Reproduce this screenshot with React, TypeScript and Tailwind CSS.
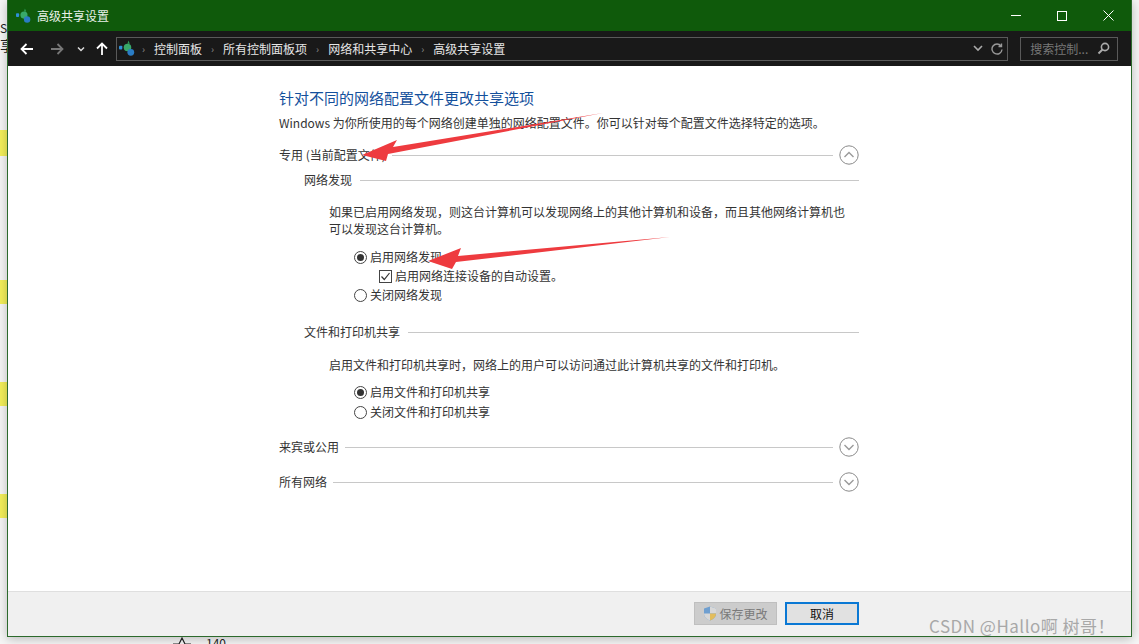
const FONT = "font-['Microsoft_YaHei','Noto_Sans_CJK_SC','Noto_Sans',sans-serif]";

function NetIcon({ size = 18 }: { size?: number }) {
  return (
    <svg width={size} height={size} viewBox="0 0 18 18" className="shrink-0">
      <rect x="0" y="6" width="3.5" height="4" rx="1" fill="#2f8fd8" />
      <path d="M10 0.5 L11.5 4 L9 4 Z" fill="#2f9e57" />
      <circle cx="9" cy="8" r="4" fill="#38a96a" />
      <circle cx="12.5" cy="13" r="3.6" fill="#2a7cc4" />
    </svg>
  );
}

function Radio({ checked }: { checked?: boolean }) {
  return (
    <span className="w-[13px] h-[13px] rounded-full border border-[#444] bg-white flex items-center justify-center shrink-0">
      {checked && <span className="w-[7px] h-[7px] rounded-full bg-[#333]" />}
    </span>
  );
}

function Chevron({ up }: { up?: boolean }) {
  return (
    <svg width="20" height="20" viewBox="0 0 20 20" className="shrink-0">
      <circle cx="10" cy="10" r="9.2" fill="white" stroke="#8a8a8a" strokeWidth="1" />
      <path d={up ? "M5.5 12 L10 7.5 L14.5 12" : "M5.5 8 L10 12.5 L14.5 8"} fill="none" stroke="#9a9a9a" strokeWidth="1.4" />
    </svg>
  );
}

function SectionHead({ label, up }: { label: string; up?: boolean }) {
  return (
    <div className="flex items-center h-5 w-[580px]">
      <span className="text-[12px] text-[#333] whitespace-nowrap">{label}</span>
      <span className="flex-1 h-px bg-[#c8c8c8] ml-[6px] mr-[6px]" />
      <Chevron up={up} />
    </div>
  );
}

function SubHead({ label }: { label: string }) {
  return (
    <div className="flex items-center h-[18px] w-[555px] ml-[25px]">
      <span className="text-[12px] text-[#333] whitespace-nowrap">{label}</span>
      <span className="flex-1 h-px bg-[#c8c8c8] ml-[8px]" />
    </div>
  );
}

function Option({ label, checked }: { label: string; checked?: boolean }) {
  return (
    <div className="flex items-center gap-[3px] ml-[75px] h-[19px] text-[12px] text-[#333] whitespace-nowrap">
      <Radio checked={checked} />
      <span className="-mt-[2px]">{label}</span>
    </div>
  );
}

export default function App() {
  return (
    <div className={`relative w-[1139px] h-[644px] overflow-hidden bg-[#f6f6f6] ${FONT}`}>
      {/* page behind the window */}
      <div className="absolute left-0 top-[130px] w-[7px] h-[26px] bg-[#f4f05a]" />
      <div className="absolute left-0 top-[280px] w-[7px] h-[24px] bg-[#f4f05a]" />
      <div className="absolute left-0 top-[382px] w-[7px] h-[24px] bg-[#f4f05a]" />
      <div className="absolute left-0 top-[494px] w-[7px] h-[24px] bg-[#f4f05a]" />
      <div className="absolute left-0 top-[22px] text-[12px] text-[#222] leading-none">S</div>
      <div className="absolute left-0 top-[38px] text-[14px] text-[#222] leading-none">享</div>
      <div className="absolute left-[172px] top-[637px] flex items-start gap-[14px] text-[12px] leading-none text-[#222]">
        <svg width="20" height="12" viewBox="0 0 20 12"><path d="M1 7 L7 7 L10 1 L13 7 L19 7" fill="none" stroke="#222" strokeWidth="1.2" /></svg>
        <span>140</span>
      </div>

      {/* window */}
      <div className="relative ml-[7px] w-[1125px] h-[637px] border-x border-b border-[#2c6a2c] bg-white flex flex-col shadow-[0_2px_10px_rgba(0,0,0,0.25)]">
        {/* title bar */}
        <div className="h-[31px] bg-[#0f5a0b] flex items-center pl-[8px] text-white shrink-0">
          <NetIcon size={16} />
          <span className="ml-[5px] text-[12px] text-[#e8f0e8]">高级共享设置</span>
          <div className="ml-auto flex items-center">
            <div className="w-[46px] h-[31px] flex items-center justify-center"><span className="w-[10px] h-px bg-white" /></div>
            <div className="w-[46px] h-[31px] flex items-center justify-center"><span className="w-[10px] h-[10px] border border-white" /></div>
            <div className="w-[46px] h-[31px] flex items-center justify-center">
              <svg width="11" height="11" viewBox="0 0 11 11"><path d="M0.5 0.5 L10.5 10.5 M10.5 0.5 L0.5 10.5" stroke="white" strokeWidth="1" /></svg>
            </div>
          </div>
        </div>

        {/* toolbar */}
        <div className="h-[35px] bg-[#191919] flex items-center shrink-0 pl-[12px] pr-[13px]">
          <svg width="14" height="12" viewBox="0 0 14 12" className="shrink-0"><path d="M13 6 H2 M6.5 1 L1.5 6 L6.5 11" fill="none" stroke="white" strokeWidth="1.8" /></svg>
          <svg width="14" height="12" viewBox="0 0 14 12" className="shrink-0 ml-[16px]"><path d="M1 6 H12 M7.5 1 L12.5 6 L7.5 11" fill="none" stroke="#777" strokeWidth="1.8" /></svg>
          <svg width="8" height="6" viewBox="0 0 8 6" className="shrink-0 ml-[13px]"><path d="M1 1.5 L4 4.5 L7 1.5" fill="none" stroke="#ddd" strokeWidth="1.5" /></svg>
          <svg width="12" height="14" viewBox="0 0 12 14" className="shrink-0 ml-[11px]"><path d="M6 13 V2 M1 6.5 L6 1.5 L11 6.5" fill="none" stroke="white" strokeWidth="1.8" /></svg>
          <div className="ml-[8px] w-[895px] h-[24px] border border-[#5a5a5a] flex items-center pl-[2px] pr-[4px] text-[12px] text-[#e6e6e6]">
            <NetIcon size={17} />
            <span className="ml-[6px] text-[#888] text-[10px]">›</span>
            <span className="ml-[9px]">控制面板</span>
            <span className="ml-[9px] text-[#888] text-[10px]">›</span>
            <span className="ml-[9px]">所有控制面板项</span>
            <span className="ml-[9px] text-[#888] text-[10px]">›</span>
            <span className="ml-[9px]">网络和共享中心</span>
            <span className="ml-[9px] text-[#888] text-[10px]">›</span>
            <span className="ml-[9px]">高级共享设置</span>
            <svg width="10" height="7" viewBox="0 0 10 7" className="ml-auto"><path d="M1 1 L5 5 L9 1" fill="none" stroke="#aaa" strokeWidth="1.6" /></svg>
            <svg width="12" height="12" viewBox="0 0 12 12" className="ml-[8px]"><path d="M10 3 A5 5 0 1 0 11 6.5 M10.5 0.5 V3.5 H7.5" fill="none" stroke="#999" strokeWidth="1.4" /></svg>
          </div>
          <div className="ml-[12px] w-[98px] h-[24px] border border-[#5a5a5a] flex items-center pl-[9px] pr-[7px] text-[12px] text-[#777] whitespace-nowrap">
            <span>搜索控制...</span>
            <svg width="13" height="13" viewBox="0 0 13 13" className="ml-auto"><circle cx="8" cy="5" r="3.6" fill="none" stroke="#aaa" strokeWidth="1.6" /><path d="M5.5 7.5 L1.5 11.5" stroke="#aaa" strokeWidth="2" /></svg>
          </div>
        </div>

        {/* body */}
        <div className="flex-1 pl-[271px] pt-[21px] flex flex-col">
          <h1 className="text-[15px] leading-[22px] text-[#14509c] font-normal whitespace-nowrap">针对不同的网络配置文件更改共享选项</h1>
          <p className="mt-[5px] text-[12px] leading-[18px] text-[#333] whitespace-nowrap">Windows 为你所使用的每个网络创建单独的网络配置文件。你可以针对每个配置文件选择特定的选项。</p>
          <div className="mt-[13px]"><SectionHead label="专用 (当前配置文件)" up /></div>
          <div className="mt-[6px]"><SubHead label="网络发现" /></div>
          <p className="mt-[14px] ml-[50px] w-[520px] text-[12px] leading-[17px] text-[#333]">如果已启用网络发现，则这台计算机可以发现网络上的其他计算机和设备，而且其他网络计算机也可以发现这台计算机。</p>
          <div className="mt-[11px]"><Option label="启用网络发现" checked /></div>
          <div className="flex items-center gap-[3px] ml-[100px] h-[19px] text-[12px] text-[#333] whitespace-nowrap">
            <span className="w-[13px] h-[13px] border border-[#444] bg-white flex items-center justify-center shrink-0">
              <svg width="11" height="11" viewBox="0 0 11 11"><path d="M1.5 5.5 L4.3 8.5 L9.5 2" fill="none" stroke="#333" strokeWidth="1.2" /></svg>
            </span>
            <span className="-mt-[2px]">启用网络连接设备的自动设置。</span>
          </div>
          <Option label="关闭网络发现" />
          <div className="mt-[18px]"><SubHead label="文件和打印机共享" /></div>
          <p className="mt-[15px] ml-[50px] text-[12px] leading-[17px] text-[#333] whitespace-nowrap">启用文件和打印机共享时，网络上的用户可以访问通过此计算机共享的文件和打印机。</p>
          <div className="mt-[10px]"><Option label="启用文件和打印机共享" checked /></div>
          <div className="mt-[1px]"><Option label="关闭文件和打印机共享" /></div>
          <div className="mt-[15px]"><SectionHead label="来宾或公用" /></div>
          <div className="mt-[15px]"><SectionHead label="所有网络" /></div>
        </div>

        {/* footer */}
        <div className="h-[45px] bg-[#f0f0f0] border-t border-[#dfdfdf] shrink-0 flex items-start pt-[10px] pl-[686px] gap-[8px] text-[12px]">
          <div className="w-[83px] h-[23px] bg-[#cccccc] border border-[#bfbfbf] flex items-center justify-center gap-[2px] text-[#7a7a7a]">
            <svg width="14" height="15" viewBox="0 0 14 15">
              <path d="M7 0.5 L13 2.5 V8 C13 11 10 13.5 7 14.5 C4 13.5 1 11 1 8 V2.5 Z" fill="#6f9fd0" />
              <path d="M7 0.5 L13 2.5 V7.5 H7 Z" fill="#d8d8d8" />
              <path d="M7 7.5 V14.5 C4 13.5 1 11 1 7.5 Z" fill="#d8d8d8" />
              <path d="M7 7.5 H13 C13 11 10 13.5 7 14.5 Z" fill="#e3bd5c" />
            </svg>
            <span>保存更改</span>
          </div>
          <div className="w-[74px] h-[23px] bg-[#e1e1e1] border-2 border-[#0a78d4] flex items-center justify-center text-[#111]">取消</div>
        </div>
      </div>

      {/* red annotation arrows */}
      <svg width="1139" height="644" viewBox="0 0 1139 644" className="absolute left-0 top-0 pointer-events-none">
        <polygon points="603,113 393,147 397,140 362,155 386,161 388,154" fill="#ee3b3f" />
        <polygon points="670,237 458,256 461,248 428,261 452,269 456,262" fill="#ee3b3f" />
      </svg>

      {/* watermark */}
      <div className="absolute left-[929px] top-[614px] text-[17px] leading-[24px] tracking-[0.5px] text-[#a8a8a8] whitespace-nowrap">CSDN @Hallo啊 树哥！</div>
    </div>
  );
}
